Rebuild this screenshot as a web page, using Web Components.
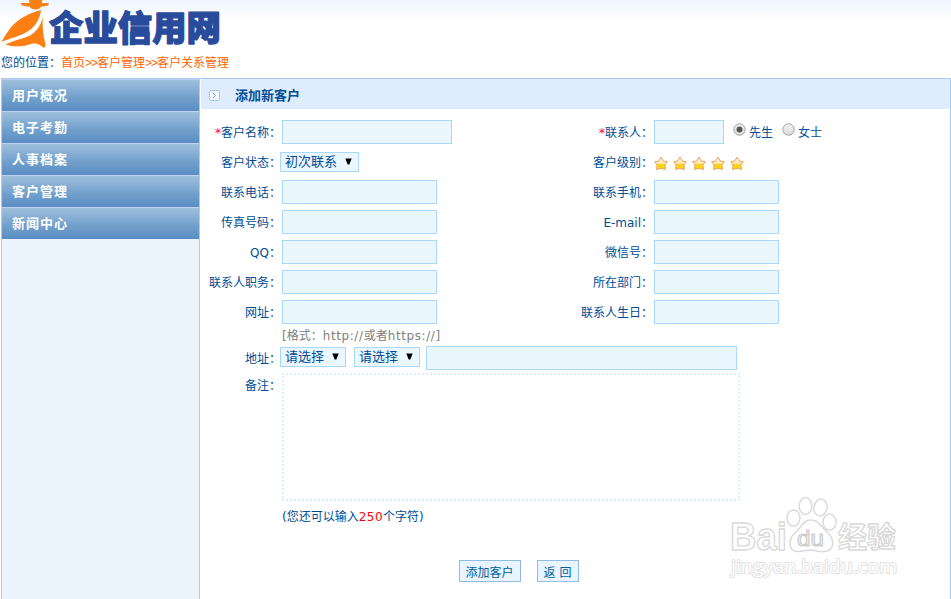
<!DOCTYPE html>
<html lang="zh-CN">
<head>
<meta charset="utf-8">
<title>添加新客户</title>
<style>
  html, body {
    margin: 0;
    height: 599px;
    overflow: hidden;
    background: #fff;
  }
  body {
    font: 12px/18px "DejaVu Sans", "Noto Sans CJK SC", sans-serif;
    color: #004c95;
  }
</style>
</head>
<body>
<crm-page>
  <site-header slot="header"></site-header>
  <side-menu slot="side">
    <menu-item>用户概况</menu-item>
    <menu-item>电子考勤</menu-item>
    <menu-item>人事档案</menu-item>
    <menu-item>客户管理</menu-item>
    <menu-item>新闻中心</menu-item>
  </side-menu>
  <panel-title>添加新客户</panel-title>
  <customer-form></customer-form>
  <page-watermark slot="mark"></page-watermark>
</crm-page>

<script>
class BaseElement extends HTMLElement {
  constructor() {
    super();
    this.attachShadow({ mode: "open" });
  }
  connectedCallback() {
    const template = document.createElement("template");
    template.innerHTML = `<style>${this.getStyles()}</style>${this.getTemplate()}`;
    this.shadowRoot.replaceChildren(template.content.cloneNode(true));
  }
  getTemplate() {
    return `<slot></slot>`;
  }
}

/* page frame */
class CrmPage extends BaseElement {
  getTemplate() {
    return `
      <slot name="header"></slot>
      <div class="body">
        <slot name="side"></slot>
        <main><slot></slot></main>
      </div>
      <slot name="mark"></slot>`;
  }
  getStyles() {
    return `
      :host { display: flex; flex-direction: column; width: 951px; height: 599px; position: relative; }
      .body {
        flex: 1;
        display: flex;
        margin-left: 1px;
        border-top: 1px solid #a9cdf2;
        border-right: 1px solid #a9cdf2;
      }
      main { flex: 1; padding-left: 1px; }
    `;
  }
}
customElements.define("crm-page", CrmPage);

/* logo and breadcrumb */
class SiteHeader extends BaseElement {
  getTemplate() {
    return `
      <svg width="226" height="54" viewBox="0 0 226 54">
        <g fill="#fb7f12">
          <path d="M29 0H42.500L41.500 3C44 3.200 47 2.800 49 3.500C49 5.500 46.500 6.500 41 6.500C40.500 8.500 38 9.500 35.500 9.500C33 9.500 30.500 8.500 29.500 6.500C24 6.500 21 5.500 20.500 3.500C23 2.800 27 3.200 29.500 3Z"/>
          <path d="M41 10C29 13 20 18 12 26C8 31 4 37 1.500 42C11 38 21 36 28.500 31C36 26 40 18 41 10Z"/>
          <path d="M43 11C43 22 39 29 31 35C24 39 14 40 5.500 44.500C14 47.500 24 46.500 31 44C36 42.500 40 44.500 44 48C45 47 45.500 45.500 45.500 44C43 35 42 25 43 11Z"/>
        </g>
        <text x="49" y="40.500" textLength="172" lengthAdjust="spacingAndGlyphs">企业信用网</text>
      </svg>
      <nav>您的位置：<a>首页</a><i>&gt;&gt;</i><a>客户管理</a><i>&gt;&gt;</i><a>客户关系管理</a></nav>`;
  }
  getStyles() {
    return `
      :host { display: block; height: 78px; background: linear-gradient(#edf5ff, #fff 21px); }
      svg { display: block; height: 54px; }
      text {
        font: 900 35px "Noto Sans CJK SC", sans-serif;
        fill: #284b9c;
        stroke: #284b9c;
        stroke-width: 1.300px;
        stroke-linejoin: round;
      }
      nav { padding-left: 1px; line-height: 18px; white-space: nowrap; }
      a { color: #f60; }
      i { font: 12px "Liberation Sans", sans-serif; letter-spacing: -1px; color: #f60; }
    `;
  }
}
customElements.define("site-header", SiteHeader);

class SideMenu extends BaseElement {
  getStyles() {
    return `
      :host {
        display: block;
        width: 197px;
        background: #ebf3fb;
        border-left: 1px solid #a9cdf2;
        border-right: 1px solid #a9cdf2;
      }
    `;
  }
}
customElements.define("side-menu", SideMenu);

class MenuItem extends BaseElement {
  getStyles() {
    return `
      :host {
        display: block;
        box-sizing: border-box;
        height: 32px;
        padding-left: 10px;
        border-top: 1px solid #bccdf0;
        background: linear-gradient(#9dbfdc, #73a1cd 55%, #598dc2);
        color: #fff;
        font-size: 13px;
        font-weight: bold;
        letter-spacing: 1px;
        line-height: 31px;
      }
    `;
  }
}
customElements.define("menu-item", MenuItem);

class PanelTitle extends BaseElement {
  getTemplate() {
    return `
      <svg width="11" height="11" viewBox="0 0 11 11" fill="none">
        <rect x=".5" y=".5" width="10" height="10" rx="1.500" fill="#f5faff" stroke="#a6c9ea"/>
        <path d="M4 3L6.500 5.500L4 8" stroke="#6ea5da"/>
      </svg>
      <span><slot></slot></span>`;
  }
  getStyles() {
    return `
      :host {
        display: flex;
        align-items: center;
        gap: 15px;
        height: 30px;
        padding: 2px 0 0 8px;
        box-sizing: border-box;
        background: #deecfd;
        font-size: 13px;
        font-weight: bold;
      }
      span { padding-top: 1px; }
    `;
  }
}
customElements.define("panel-title", PanelTitle);

class FieldLabel extends BaseElement {
  getTemplate() {
    return `${this.hasAttribute("required") ? "<b>*</b>" : ""}<slot></slot>`;
  }
  getStyles() {
    return `
      :host { display: block; padding: 1px 1px 0 0; text-align: right; white-space: nowrap; }
      b { color: #f00; font-weight: normal; }
    `;
  }
}
customElements.define("field-label", FieldLabel);

class TextBox extends BaseElement {
  getTemplate() {
    return `<input type="text">`;
  }
  getStyles() {
    return `
      :host { display: block; width: 155px; height: 24px; }
      input {
        display: block;
        box-sizing: border-box;
        width: 100%;
        height: 100%;
        margin: 0;
        padding: 0 4px;
        border: 1px solid #a8d8fd;
        border-radius: 0;
        background: #eaf7ff;
        color: inherit;
        font: inherit;
        outline: none;
      }
    `;
  }
}
customElements.define("text-box", TextBox);

class SelectBox extends BaseElement {
  getTemplate() {
    return `
      <slot></slot>
      <svg width="7" height="7" viewBox="0 0 7 7"><path d="M.3 .5H6.700L4.300 6.500H2.700Z" fill="#000"/></svg>`;
  }
  getStyles() {
    return `
      :host {
        display: flex;
        align-items: center;
        justify-content: space-between;
        box-sizing: border-box;
        height: 20px;
        padding: 0 6px 0 4px;
        border: 1px solid #a8d8fd;
        background: #eaf7ff;
        font-size: 13px;
        white-space: nowrap;
      }
      svg { margin-bottom: 1px; }
    `;
  }
}
customElements.define("select-box", SelectBox);

class RadioOption extends BaseElement {
  getTemplate() {
    const dot = this.hasAttribute("checked") ? `<circle cx="6.500" cy="6.500" r="3" fill="#555"/>` : "";
    return `
      <svg width="13" height="13" viewBox="0 0 13 13">
        <defs><linearGradient id="g" x2="0" y2="1"><stop stop-color="#f2f2f2"/><stop offset="1" stop-color="#dcdcdc"/></linearGradient></defs>
        <circle cx="6.500" cy="6.500" r="5.700" fill="url(#g)" stroke="#a0a0a0"/>${dot}
      </svg>
      <span><slot></slot></span>`;
  }
  getStyles() {
    return `
      :host { display: flex; align-items: center; gap: 3px; }
      svg { margin-bottom: 6px; }
      span { padding-top: 1px; }
    `;
  }
}
customElements.define("radio-option", RadioOption);

class StarRating extends BaseElement {
  getTemplate() {
    const star = `
      <svg width="14" height="15" viewBox="0 0 14 15">
        <defs><linearGradient id="s" x2="0" y2="1"><stop offset=".2" stop-color="#fff3dc"/><stop offset=".52" stop-color="#ffe3a4"/><stop offset=".6" stop-color="#ffcf1c"/><stop offset="1" stop-color="#ffe000"/></linearGradient></defs>
        <path d="M7 1.200L9.200 4.900L13.300 5.800L10.900 9L11.400 13.500L7 12.200L2.600 13.500L3.100 9L.7 5.800L4.800 4.900Z" fill="url(#s)" stroke="#e8a05c" stroke-linejoin="round"/>
      </svg>`;
    return star.repeat(Number(this.getAttribute("value")));
  }
  getStyles() {
    return `
      :host { display: flex; gap: 5px; padding-top: 2px; }
    `;
  }
}
customElements.define("star-rating", StarRating);

class FormButton extends BaseElement {
  getTemplate() {
    return `<button><slot></slot></button>`;
  }
  getStyles() {
    return `
      :host { display: block; height: 22px; }
      button {
        display: block;
        box-sizing: border-box;
        width: 100%;
        height: 22px;
        padding: 3px 1px 0 0;
        border: 1px solid #8fbde4;
        background: #e8f4ff;
        color: #006098;
        font: inherit;
        line-height: 18px;
        white-space: nowrap;
      }
    `;
  }
}
customElements.define("form-button", FormButton);

class CustomerForm extends BaseElement {
  getTemplate() {
    return `
      <div class="fields">
        <field-label required>客户名称：</field-label>
        <text-box style="width:170px"></text-box>
        <field-label required>联系人：</field-label>
        <div class="line">
          <text-box style="width:70px"></text-box>
          <radio-option checked class="first">先生</radio-option>
          <radio-option class="second">女士</radio-option>
        </div>

        <field-label>客户状态：</field-label>
        <div class="line selects"><select-box style="width:79px">初次联系</select-box></div>
        <field-label>客户级别：</field-label>
        <star-rating value="5"></star-rating>

        <field-label>联系电话：</field-label>
        <text-box></text-box>
        <field-label>联系手机：</field-label>
        <text-box class="right"></text-box>

        <field-label>传真号码：</field-label>
        <text-box></text-box>
        <field-label>E-mail：</field-label>
        <text-box class="right"></text-box>

        <field-label>QQ：</field-label>
        <text-box></text-box>
        <field-label>微信号：</field-label>
        <text-box class="right"></text-box>

        <field-label>联系人职务：</field-label>
        <text-box></text-box>
        <field-label>所在部门：</field-label>
        <text-box class="right"></text-box>

        <field-label>网址：</field-label>
        <text-box></text-box>
        <field-label>联系人生日：</field-label>
        <text-box class="right"></text-box>
      </div>
      <div class="wide">
        <span></span>
        <span class="format">[格式：<i>http://</i>或者<i>https://</i>]</span>
        <field-label>地址：</field-label>
        <div class="line address">
          <select-box>请选择</select-box>
          <select-box>请选择</select-box>
          <text-box></text-box>
        </div>
        <field-label class="top">备注：</field-label>
        <div>
          <textarea></textarea>
          <p>(您还可以输入<em>250</em>个字符)</p>
        </div>
      </div>
      <div class="actions">
        <form-button style="width:62px">添加客户</form-button>
        <form-button style="width:42px">返 回</form-button>
      </div>`;
  }
  getStyles() {
    return `
      :host { display: block; padding-top: 8px; }
      .fields {
        display: grid;
        grid-template-columns: 81px 291px 81px 1fr;
        grid-auto-rows: 30px;
        align-items: center;
      }
      .line { display: flex; align-items: center; }
      .right { width: 125px; }
      .first { margin-left: 9px; }
      .second { margin-left: 9px; }
      .selects { margin-left: -2px; }
      .wide {
        display: grid;
        grid-template-columns: 81px 1fr;
        grid-template-rows: 18px 26px auto;
        align-items: center;
      }
      .format { color: #808080; }
      .format i { font-style: normal; letter-spacing: .6px; }
      .address { margin-left: -2px; }
      .address select-box { width: 66px; margin: 0 8px 2px 0; }
      .address text-box { width: 311px; margin-left: -2px; }
      .top { align-self: start; padding-top: 6px; }
      textarea {
        display: block;
        box-sizing: border-box;
        width: 458px;
        height: 128px;
        margin: 2px 0 0;
        border: 2px dotted #deecfd;
        background: #fff;
        color: inherit;
        font: inherit;
        resize: none;
        outline: none;
      }
      p { margin: 7px 0 0; }
      em { color: #f00; font-style: normal; letter-spacing: .5px; }
      .actions { display: flex; gap: 16px; padding: 34px 0 0 258px; }
    `;
  }
}
customElements.define("customer-form", CustomerForm);

/* outlined logo over the bottom right corner */
class PageWatermark extends BaseElement {
  getTemplate() {
    return `
      <svg width="176" height="90" viewBox="725 494 176 90">
        <g fill="#fff" stroke="#dadada" stroke-width="1.500">
          <ellipse cx="793.500" cy="518" rx="6.500" ry="8"/>
          <ellipse cx="805.500" cy="506" rx="6.300" ry="8.500"/>
          <ellipse cx="820.500" cy="507.500" rx="6.500" ry="8.500" transform="rotate(12 820.500 507.500)"/>
          <ellipse cx="829.500" cy="522" rx="6.500" ry="8"/>
          <path d="M811 520C819 520 821 527 827 532C835 539 835 551 824 551.500C818 552 815 550 811 550C806 550 802 552 797 551.500C788 551 788 539 795 533C802 527 803 520 811 520Z"/>
        </g>
        <text class="logo" x="730" y="550" font-size="38" textLength="57" lengthAdjust="spacingAndGlyphs">Bai</text>
        <text class="logo du" x="797" y="546" font-size="22" textLength="27" lengthAdjust="spacingAndGlyphs">du</text>
        <text class="logo" x="838" y="547.500" font-size="29" textLength="58" lengthAdjust="spacingAndGlyphs">经验</text>
        <text class="url" x="731" y="572.500" font-size="19" textLength="166" lengthAdjust="spacingAndGlyphs">jingyan.baidu.com</text>
      </svg>`;
  }
  getStyles() {
    return `
      :host { position: absolute; left: 725px; top: 494px; pointer-events: none; }
      svg { display: block; }
      text { fill: #fff; stroke: #dadada; stroke-width: 1.400px; stroke-linejoin: round; }
      .logo { font-family: "Liberation Sans", "Noto Sans CJK SC", sans-serif; font-weight: bold; }
      .du { stroke: #ccc; stroke-width: 1.200px; font-weight: normal; }
      .url { font-family: "Open Sans", sans-serif; stroke: #e2e2e2; stroke-width: 2px; paint-order: stroke; }
    `;
  }
}
customElements.define("page-watermark", PageWatermark);
</script>
</body>
</html>
